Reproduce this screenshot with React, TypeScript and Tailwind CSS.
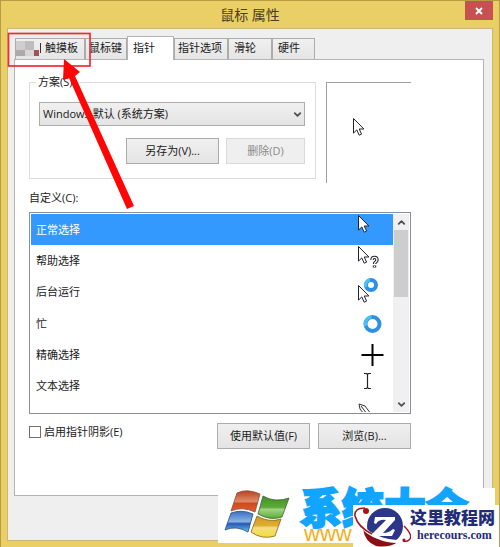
import { useState } from 'react'
import type { ReactNode } from 'react'
import clsx from 'clsx'
import { ChevronDown, ChevronUp } from 'lucide-react'

interface Scheme {
  name: string
  icon: ReactNode
}

function CursorArrow({ x = 1, y = 0, fill = 'white' }: { x?: number; y?: number; fill?: string }) {
  return (
    <path
      transform={`translate(${x} ${y})`}
      d="M.5.5v14.600l3.300-3.200 2.400 5.300 2.400-1.100-2.400-5.100h4.700z"
      fill={fill}
      stroke="#22222e"
      strokeWidth="1"
    />
  )
}

function Ring({ cx, cy, r }: { cx: number; cy: number; r: number }) {
  return (
    <>
      <circle cx={cx} cy={cy} r={r} fill="white" stroke="#2f8fe8" strokeWidth="4" />
      <path
        d={`M${cx - r} ${cy + 2}A${r} ${r} 0 0 1 ${cx - 1} ${cy - r}`}
        fill="none"
        stroke="#45c4f4"
        strokeWidth="3"
      />
    </>
  )
}

const schemes: Scheme[] = [
  { name: '正常选择', icon: <CursorArrow y={1} /> },
  {
    name: '帮助选择',
    icon: (
      <>
        <CursorArrow y={1} />
        <path d="M15 15c0-3.500 5-3.500 5 0 0 2-2.500 2-2.500 4M17.500 20.500v2" fill="none" stroke="#22222e" strokeWidth="3.400" />
        <path d="M15 15c0-3.500 5-3.500 5 0 0 2-2.500 2-2.500 4M17.500 21v1" fill="none" stroke="white" strokeWidth="1.300" />
      </>
    )
  },
  {
    name: '后台运行',
    icon: (
      <>
        <Ring cx={14} cy={8} r={5} />
        <CursorArrow y={8} />
      </>
    )
  },
  { name: '忙', icon: <Ring cx={15.5} cy={16} r={7} /> },
  {
    name: '精确选择',
    icon: <path d="M15.500 5v22M4.500 16h22" stroke="black" strokeWidth="2" />
  },
  {
    name: '文本选择',
    icon: <path d="M7 2.500h2.500l1 1 1-1H14M10.500 3.500v13M7 17.500h2.500l1-1 1 1H14" fill="none" stroke="#222" strokeWidth="1.200" />
  }
]

const tabs = [
  { name: '触摸板', width: 'w-[70px]' },
  { name: '鼠标键', width: 'w-[42px]' },
  { name: '指针', width: 'w-[47px]' },
  { name: '指针选项', width: 'w-[54px]' },
  { name: '滑轮', width: 'w-[44px]' },
  { name: '硬件', width: 'w-[43px]' }
]

function PushButton({ children, disabled }: { children: ReactNode; disabled?: boolean }) {
  return (
    <button
      type="button"
      disabled={disabled}
      className={clsx(
        'h-[26px] border whitespace-nowrap',
        disabled
          ? 'w-[79px] border-[#d9d9d9] bg-[#efefef] text-[#8b8b8b]'
          : 'w-[93px] border-[#acacac] bg-linear-to-b from-[#f0f0f0] to-[#e4e4e4]'
      )}
    >
      {children}
    </button>
  )
}

function TabStrip({ active, onChange }: { active: string; onChange: (name: string) => void }) {
  return (
    <div role="tablist" className="flex items-end px-px">
      {tabs.map((tab, index) => (
        <button
          key={tab.name}
          type="button"
          role="tab"
          aria-selected={active === tab.name}
          onClick={() => onChange(tab.name)}
          className={clsx(
            'flex border border-b-0 whitespace-nowrap',
            tab.width,
            active === tab.name
              ? 'relative -mb-px h-[24px] border-[#b4b4b4] bg-white pt-1'
              : 'h-[21px] border-[#acacac] bg-linear-to-b from-[#f0f0f0] to-[#e5e5e5] pt-[2px]',
            active === tab.name || index > 3 ? 'pl-[5px]' : index > 0 && 'pl-[3px]'
          )}
        >
          {index === 0 && (
            <svg viewBox="0 0 29 18" className="h-[18px] w-[29px] shrink-0" aria-hidden="true">
              <path d="M0 0h9v9H0z" fill="#cfcdcd" />
              <path d="M9 0h9v9H9z" fill="#bdbdbd" />
              <path d="M0 9h9v6H0z" fill="#aaa" />
              <path d="M9 9h9v6H9z" fill="#d8d6d6" />
              <path d="M18 9h5v6h-5z" fill="#a35058" />
              <path d="M24.500 2v10" stroke="#333" />
            </svg>
          )}
          {tab.name}
        </button>
      ))}
    </div>
  )
}

function SchemeList() {
  const [selected, setSelected] = useState('正常选择')

  return (
    <div className="mt-[7px] flex h-[202px] border border-[#8c8f98] bg-white p-px">
      <div className="min-w-0 flex-1 overflow-hidden">
        <ul role="listbox" aria-labelledby="custom-label" className="grid h-[188px] grid-rows-6">
          {schemes.map((scheme) => (
            <li
              key={scheme.name}
              role="option"
              aria-selected={selected === scheme.name}
              onClick={() => setSelected(scheme.name)}
              className={clsx(
                'flex min-h-0 items-center justify-between pl-[5px]',
                selected === scheme.name && 'bg-[#3399ff] text-white'
              )}
            >
              {scheme.name}
              <svg viewBox="0 0 36 31" className="h-[31px] w-[36px]" aria-hidden="true">
                {scheme.icon}
              </svg>
            </li>
          ))}
        </ul>
        <svg viewBox="0 0 36 12" className="ml-auto h-[12px] w-[36px]" aria-hidden="true">
          <path d="M2 2l1 5 4 5M2 2l6 2 6 8M4 4l6 8" fill="none" stroke="#333" />
        </svg>
      </div>
      <div className="flex w-[16px] flex-col items-center bg-[#f0f0f0]">
        <button type="button" aria-label="向上滚动" className="flex h-4 items-center">
          <ChevronUp size={11} strokeWidth={4} color="#505050" />
        </button>
        <div className="h-[67px] w-[14px] bg-[#cdcdcd]" />
        <button type="button" aria-label="向下滚动" className="mt-auto flex h-4 items-center">
          <ChevronDown size={11} strokeWidth={4} color="#505050" />
        </button>
      </div>
    </div>
  )
}

function WindowsFlag() {
  return (
    <svg viewBox="0 0 66 48" className="h-[48px] w-[66px] shrink-0" aria-hidden="true">
      <defs>
        <linearGradient id="flag-red" x2="0" y2="1">
          <stop stopColor="#b9401f" />
          <stop offset=".5" stopColor="#e08a68" />
          <stop offset=".6" stopColor="#cf4a1c" />
          <stop offset="1" stopColor="#e0603a" />
        </linearGradient>
        <linearGradient id="flag-green" x2="0" y2="1">
          <stop stopColor="#3f8f22" />
          <stop offset=".5" stopColor="#5cab3a" />
          <stop offset=".6" stopColor="#a5d284" />
          <stop offset="1" stopColor="#55ad33" />
        </linearGradient>
        <linearGradient id="flag-blue" x2="0" y2="1">
          <stop stopColor="#3a6fc0" />
          <stop offset=".5" stopColor="#86b4e6" />
          <stop offset=".6" stopColor="#2c55b5" />
          <stop offset="1" stopColor="#52cdf5" />
        </linearGradient>
        <linearGradient id="flag-yellow" x2="0" y2="1">
          <stop stopColor="#cf961a" />
          <stop offset=".45" stopColor="#e0ae33" />
          <stop offset=".55" stopColor="#f3dd84" />
          <stop offset="1" stopColor="#f7dc33" />
        </linearGradient>
      </defs>
      <path d="M13 3Q23-2 36 4L31 22Q18 16 7 21Z" fill="url(#flag-red)" stroke="#8a4f3c" strokeWidth=".8" />
      <path d="M39 6Q51 13 65 8L58 27Q46 31 34 24Z" fill="url(#flag-green)" stroke="#3f5f35" strokeWidth=".8" />
      <path d="M7 23Q18 19 29 24L24 42Q12 35 1 40Z" fill="url(#flag-blue)" stroke="#29487d" strokeWidth=".8" />
      <path d="M33 26Q45 33 57 29L51 46Q38 50 27 42Z" fill="url(#flag-yellow)" stroke="#7c6420" strokeWidth=".8" />
    </svg>
  )
}

function PlanetLogo() {
  return (
    <svg viewBox="0 0 58 43" className="h-[43px] w-[58px] shrink-0" aria-hidden="true">
      <circle cx="32" cy="21" r="18" fill="#2c3588" />
      <path d="M22 12h20v3L30 28q6 0 10-4l2 1-3 6H20v-3l13-13q-7-1-10 4l-2-1z" fill="white" />
      <path d="M10 24Q20 35 45 37Q36 43 23 41Q12 37 10 24Z" fill="#8a1018" />
      <path d="M3 10Q7 25 24 32Q38 38 51 36" fill="none" stroke="white" strokeWidth="3" />
      <path d="M12 3Q1 3 2 11Q5 22 19 29" fill="none" stroke="#a3141b" strokeWidth="1.600" />
      <path d="M51 21Q61 31 56 35Q54 37 50 36" fill="none" stroke="#a3141b" strokeWidth="1.400" />
      <circle cx="13" cy="6" r="3" fill="#a3141b" />
      <circle cx="51" cy="35" r="1.600" fill="#a3141b" />
    </svg>
  )
}

export default function App() {
  const [activeTab, setActiveTab] = useState('指针')
  const [shadow, setShadow] = useState(false)

  return (
    <div className="relative flex min-h-screen flex-col overflow-hidden border border-[#b89b45] bg-[#e9cf66] px-[6px] pb-[6px] font-['Open_Sans','Noto_Sans_CJK_SC',sans-serif] text-[11px] leading-[14px] text-[#1a1a1a]">
      <header className="relative flex h-[27px] items-center justify-center">
        <h1 className="text-[14px] text-[#4a4020]">鼠标 属性</h1>
        <button
          type="button"
          aria-label="关闭"
          className="absolute top-0 right-0 flex h-[19px] w-[28px] items-center justify-center bg-[#c75050]"
        >
          <svg viewBox="0 0 8 8" className="h-[8px] w-[8px]" aria-hidden="true">
            <path d="M1 1l6 6M7 1L1 7" stroke="white" strokeWidth="1.800" />
          </svg>
        </button>
      </header>

      <main className="flex flex-1 flex-col border border-[#cbb774] bg-[#efefef] pt-[7px] pr-[8px] pb-[44px] pl-[6px]">
        <TabStrip active={activeTab} onChange={setActiveTab} />

        <section className="flex-1 border border-[#b4b4b4] bg-white pt-[15px] pr-[72px] pb-[46px] pl-[14px]">
          <div className="flex gap-[10px]">
            <fieldset className="min-w-0 flex-1 border border-[#dcdcdc] px-[6px] pb-[14px]">
              <legend className="px-[2px]">方案(S)</legend>
              <div className="mt-[13px] pr-[4px] pl-[3px]">
                <div className="relative">
                  <select
                    aria-label="方案"
                    className="block h-[24px] w-full appearance-none border border-[#acacac] bg-linear-to-b from-[#f0f0f0] to-[#e4e4e4] px-[3px]"
                  >
                    <option>Windows 默认 (系统方案)</option>
                  </select>
                  <ChevronDown
                    size={11}
                    strokeWidth={4}
                    color="#505050"
                    className="pointer-events-none absolute top-[7px] right-[2px]"
                  />
                </div>
                <div className="mt-3 flex justify-end gap-[7px]">
                  <PushButton>另存为(V)...</PushButton>
                  <PushButton disabled>删除(D)</PushButton>
                </div>
              </div>
            </fieldset>

            <div className="mt-[7px] -mb-1 w-[85px] border-t border-l border-[#a0a0a0] pt-[34px] pl-[25px]">
              <svg viewBox="0 0 14 20" className="h-[20px] w-[14px]" aria-hidden="true">
                <CursorArrow x={1} y={1} />
              </svg>
            </div>
          </div>

          <p id="custom-label" className="mt-3">
            自定义(C):
          </p>
          <SchemeList />

          <div className="mt-[9px] flex justify-between">
            <label className="flex h-[18px] items-center gap-[3px]">
              <input
                type="checkbox"
                checked={shadow}
                onChange={(e) => setShadow(e.target.checked)}
                className="h-[12px] w-[12px] appearance-none border border-[#707070] bg-white checked:bg-[#3399ff]"
              />
              启用指针阴影(E)
            </label>
            <div className="flex gap-2">
              <PushButton>使用默认值(F)</PushButton>
              <PushButton>浏览(B)...</PushButton>
            </div>
          </div>
        </section>
      </main>

      {/* callout pointing at the touchpad tab */}
      <svg viewBox="0 0 140 215" className="pointer-events-none absolute -top-px -left-px h-[215px] w-[140px]" aria-hidden="true">
        <rect x="8.500" y="33.500" width="81.500" height="32.500" fill="none" stroke="#f02b32" strokeWidth="1.700" />
        <path d="M64 59l16 13-5 4 59 130-7 3L69 78l-6 2z" fill="#ff0505" />
      </svg>

      <div className="absolute right-1 bottom-1 flex h-[55px] w-[277px] bg-white pt-[2px] pl-[6px]">
        <WindowsFlag />
        <div className="ml-[10px] whitespace-nowrap">
          <p className="text-[42px] leading-[36px] font-black text-[#12a5ff] [-webkit-text-stroke:2px_#12a5ff]">系统大全</p>
          <p className="pl-1 font-['Liberation_Sans'] text-[22px] leading-[16px] text-[#f5ae1b]">www</p>
        </div>
      </div>

      <div className="absolute -right-px -bottom-px flex h-[43px] w-[147px] bg-white whitespace-nowrap text-[#232c76]">
        <PlanetLogo />
        <div className="-ml-px pt-1">
          <p className="text-[17px] leading-[18px] font-black">这里教程网</p>
          <p className="pl-[7px] font-['Liberation_Serif'] text-[12px] leading-[16px] font-bold">herecours.com</p>
        </div>
      </div>
    </div>
  )
}
